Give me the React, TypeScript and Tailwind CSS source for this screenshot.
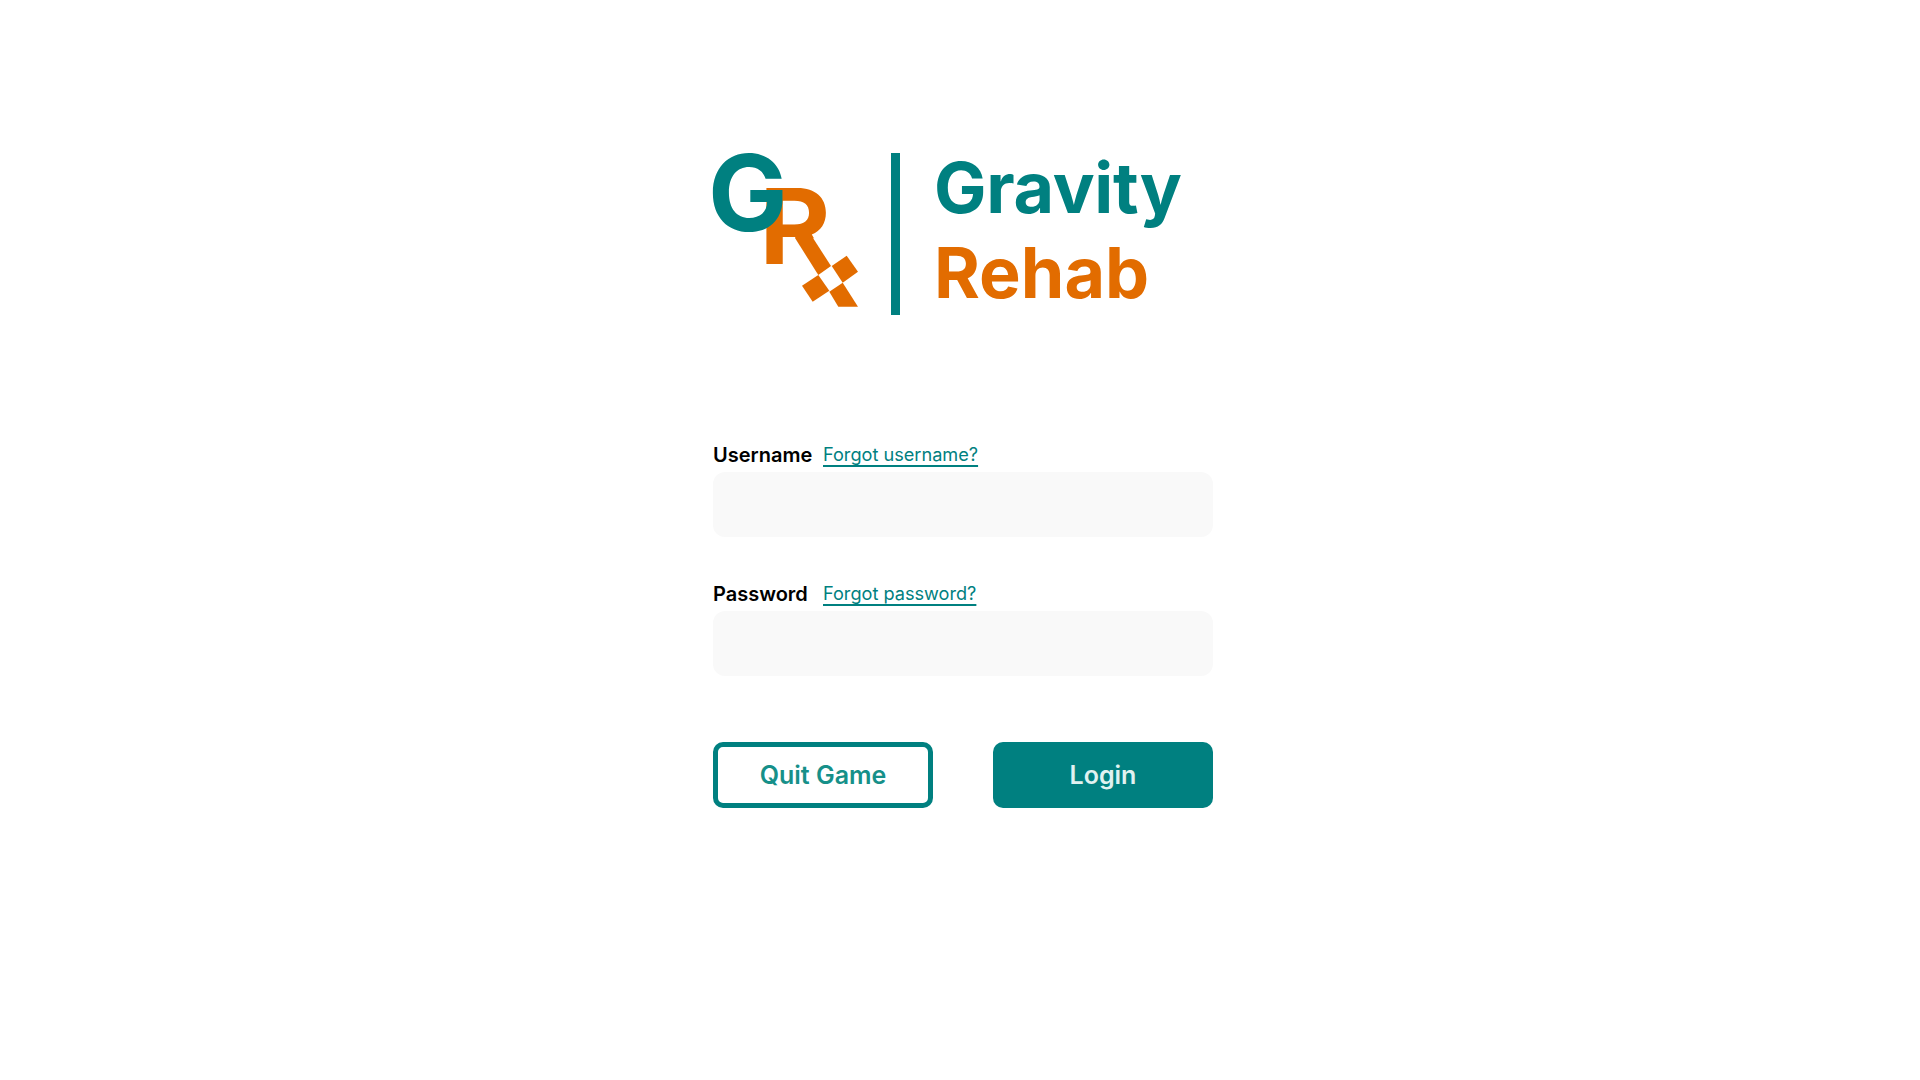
const teal = '#008080';
const orange = '#e26c00';

const Logo = () => (
  <svg width="170" height="180" viewBox="0 0 170 180" className="shrink-0 overflow-visible -ml-[13px] -mt-[13px]">
    <clipPath id="r-top">
      <rect x="50" y="40" width="80" height="58.3" />
      <rect x="50" y="40" width="33.3" height="90" />
    </clipPath>
    <g clipPath="url(#r-top)">
      <text x="59.5" y="124.3" transform="translate(65 0) scale(1.05 1) translate(-65 0)" fontFamily="Inter, sans-serif" fontWeight="700" fontSize="104" fill={orange}>R</text>
    </g>
    <g fill={orange}>
      <polygon points="95,98 97,94 109,94 111.7,96 131,126 118.3,135" />
      <polygon points="146.7,115.7 158,131.7 142.7,142.7 131.7,126" />
      <polygon points="118.3,135 129.3,150.7 112.7,161.7 102,145.7" />
      <polygon points="142.7,142.7 158,166.7 138.3,166.7 129.3,151.7" />
    </g>
    <text x="8" y="91" fontFamily="Inter, sans-serif" fontWeight="700" fontSize="106" fill={teal}>G</text>
  </svg>
);

const Field = ({ label, link, className }: { label: string; link: string; className?: string }) => (
  <div className={className}>
    <div className="flex items-baseline h-[32px]">
      <label className="w-[110px] text-[20px] font-semibold text-black">{label}</label>
      <a href="#" className="-translate-y-[1px] text-[18.15px] text-[#008080] underline underline-offset-[4px] decoration-[1.5px]">{link}</a>
    </div>
    <input type="text" className="block w-full h-[65px] rounded-[12px] bg-[#f9f9f9] outline-none" />
  </div>
);

export default function App() {
  return (
    <div className="min-h-screen bg-white font-['Inter',sans-serif] flex justify-center">
      <div className="w-[500px] ml-[6px] pt-[153px]">
        <div className="flex h-[162px]">
          <div className="w-[178px]"><Logo /></div>
          <div className="w-[9px] h-[162px] bg-[#008080]" />
          <div className="ml-[34px] -mt-[8px] font-bold text-[70px] leading-[85px]">
            <div className="text-[#008080] tracking-[-0.3px]">Gravity</div>
            <div className="text-[#e26c00]">Rehab</div>
          </div>
        </div>
        <form className="mt-[125px]">
          <Field label="Username" link="Forgot username?" />
          <Field label="Password" link="Forgot password?" className="mt-[42px]" />
          <div className="flex justify-between mt-[66px]">
            <button type="button" className="w-[220px] h-[66px] pt-[2px] rounded-[10px] border-[5px] border-[#008080] bg-white text-[25px] font-semibold text-[#169089]">Quit Game</button>
            <button type="button" className="w-[220px] h-[66px] pt-[2px] rounded-[10px] bg-[#008080] text-[25px] font-semibold text-[#e0f2f1]">Login</button>
          </div>
        </form>
      </div>
    </div>
  );
}
